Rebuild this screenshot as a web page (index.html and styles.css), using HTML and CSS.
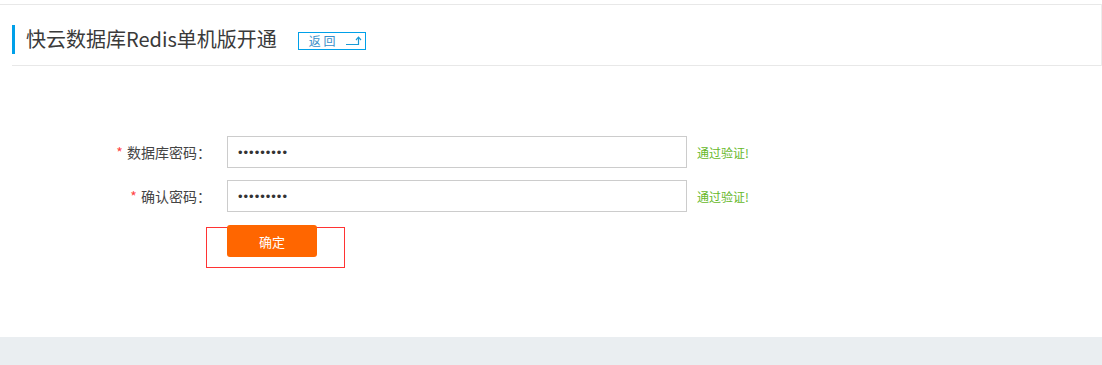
FILE: index.html
```html
<html>
<head>
    <meta charset="utf-8">
    <link rel="stylesheet" href="styles.css">
</head>
<body>
    <div class="page">
        <div class="head-wrap">
            <div class="head">
                <span class="head-bar"></span>
                <h1 class="head-title">快云数据库Redis单机版开通</h1>
                <a class="back-btn" href="#">
                    <span class="back-text">返 回</span>
                    <svg class="back-icon" width="18" height="10" viewBox="0 0 18 10">
                        <path d="M1 8.5 H13.5 V2" fill="none" stroke="#1a9ad6" stroke-width="1.2"/>
                        <path d="M11 4 L13.5 1.2 L16 4" fill="none" stroke="#1a9ad6" stroke-width="1.2"/>
                    </svg>
                </a>
            </div>
        </div>

        <form class="form">
            <div class="form-row">
                <label class="form-label"><span class="req">*</span> 数据库密码：</label>
                <input class="form-input" type="password" value="123456789">
                <span class="form-tip">通过验证!</span>
            </div>
            <div class="form-row">
                <label class="form-label"><span class="req">*</span> 确认密码：</label>
                <input class="form-input" type="password" value="123456789">
                <span class="form-tip">通过验证!</span>
            </div>
            <div class="form-row form-submit">
                <span class="submit-mark"></span>
                <button class="btn-ok" type="button">确定</button>
            </div>
        </form>
    </div>
    <div class="foot"></div>
</body>
</html>
```

FILE: styles.css
```css
body {
    margin: 0;
    background: #fff;
    font-family: "Noto Sans CJK SC", "Noto Sans", sans-serif;
    color: #333;
}
.page {
    margin-top: 4px;
    height: 333px;
}
.head-wrap {
    border-top: 1px solid #e8e8e8;
    border-right: 1px solid #ececec;
}
.head {
    display: flex;
    align-items: center;
    margin-left: 12px;
    height: 60px;
    border-bottom: 1px solid #e8e8e8;
}
.head-bar {
    width: 3px;
    height: 29px;
    background: #00a0e9;
    margin-top: 8px;
}
.head-title {
    margin: 7px 0 0 11px;
    font-size: 20px;
    font-weight: normal;
    color: #3a3a3a;
}
.back-btn {
    display: flex;
    align-items: center;
    box-sizing: border-box;
    width: 68px;
    height: 18px;
    margin: 11px 0 0 21px;
    border: 1px solid #00a0e9;
    text-decoration: none;
    font-size: 12px;
    color: #3a8fc8;
    padding-left: 10px;
}
.back-text {
    line-height: 16px;
}
.back-icon {
    margin-left: 9px;
}
.form {
    margin: 70px 0 0 0;
}
.form-row {
    display: flex;
    align-items: center;
    height: 32px;
    margin-bottom: 12px;
}
.form-label {
    width: 211px;
    text-align: right;
    font-size: 14px;
    color: #444;
}
.req {
    color: #f44;
    margin-right: 1px;
}
.form-input {
    box-sizing: border-box;
    width: 460px;
    height: 32px;
    margin: 0 0 0 16px;
    padding: 0 10px;
    border: 1px solid #ccc;
    font-size: 13px;
    letter-spacing: 1px;
    color: #333;
    outline: none;
}
.form-tip {
    margin-left: 10px;
    font-size: 12px;
    color: #66b82a;
}
.form-submit {
    position: relative;
    margin-top: 13px;
}
.submit-mark {
    position: absolute;
    left: 206px;
    top: 2px;
    width: 137px;
    height: 39px;
    border: 1px solid #f33;
}
.btn-ok {
    position: relative;
    margin-left: 227px;
    width: 90px;
    height: 32px;
    border: 0;
    border-radius: 3px;
    background: #ff6600;
    color: #fff;
    font-family: "Noto Sans CJK SC", sans-serif;
    font-size: 13px;
}
.foot {
    height: 28px;
    background: #eaeef1;
}
```
